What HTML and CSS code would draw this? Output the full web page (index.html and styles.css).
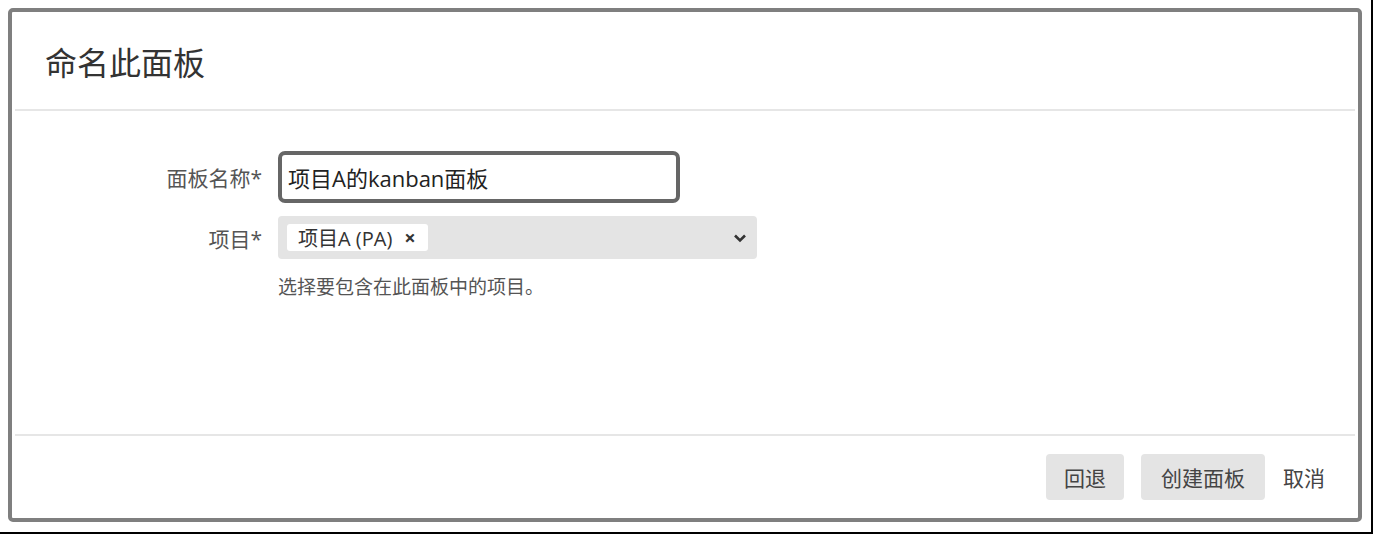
FILE: index.html
```html
<!DOCTYPE html>
<html lang="zh-CN">
<head>
<meta charset="UTF-8" />
<meta name="viewport" content="width=device-width, initial-scale=1" />
<title>命名此面板</title>
<link rel="stylesheet" href="styles.css">
</head>
<body>

<div class="page">
  <div class="dialog">
    <div class="dialog-header">
      <h2>命名此面板</h2>
    </div>

    <div class="dialog-body">
      <div class="form">
        <label class="form-label" for="board-name">面板名称*</label>
        <div class="text-input">
          <input id="board-name" type="text" value="项目A的kanban面板" />
        </div>

        <label class="form-label">项目*</label>
        <div class="multi-select">
          <span class="tag">项目A (PA) <span class="tag-remove">×</span></span>
          <svg class="chevron" width="14" height="10" viewBox="0 0 14 10">
            <path d="M2 2.5 L7 7.5 L12 2.5" fill="none" stroke="#333" stroke-width="2.6" />
          </svg>
        </div>

        <span></span>
        <div class="help">选择要包含在此面板中的项目。</div>
      </div>
    </div>

    <div class="dialog-footer">
      <button class="btn">回退</button>
      <button class="btn btn-primary">创建面板</button>
      <button class="btn btn-link">取消</button>
    </div>
  </div>
</div>

</body>
</html>
```

FILE: styles.css
```css
body {
  margin: 0;
  background: #fff;
  font-family: 'Open Sans', 'Noto Sans CJK SC', sans-serif;
  color: #333;
}
.page {
  width: 1373px;
  height: 534px;
  box-sizing: border-box;
  padding: 8px 9px 10px 8px;
  border-right: 2px solid #000;
  border-bottom: 2px solid #000;
}
.dialog {
  height: 100%;
  box-sizing: border-box;
  border: 4px solid #7f7f7f;
  border-radius: 5px;
  background: #fff;
  display: flex;
  flex-direction: column;
}
.dialog-header {
  height: 97px;
  margin: 0 3px;
  border-bottom: 2px solid #e6e6e6;
  display: flex;
  align-items: center;
  padding-left: 30px;
}
.dialog-header h2 {
  margin: 0;
  font-size: 32px;
  font-weight: 400;
  color: #333;
}

.dialog-body {
  flex: 1;
}
.form {
  display: grid;
  grid-template-columns: 250px auto;
  column-gap: 16px;
  row-gap: 13px;
  padding-top: 40px;
  align-items: center;
}
.form-label {
  text-align: right;
  font-size: 21px;
  color: #555;
}
.text-input {
  width: 402px;
  height: 52px;
  box-sizing: border-box;
  border: 4px solid #666;
  border-radius: 7px;
  padding: 0 6px;
  display: flex;
  align-items: center;
}
.text-input input {
  width: 100%;
  border: none;
  padding: 0;
  font-family: inherit;
  font-size: 22px;
  color: #222;
  outline: none;
}
.multi-select {
  width: 479px;
  height: 43px;
  box-sizing: border-box;
  background: #e4e4e4;
  border-radius: 4px;
  display: flex;
  align-items: center;
  justify-content: space-between;
  padding: 0 10px 0 9px;
}
.tag {
  background: #fff;
  border-radius: 3px;
  height: 27px;
  display: flex;
  align-items: center;
  padding: 0 12px 0 11px;
  font-size: 20px;
  color: #333;
}
.tag-remove {
  font-weight: 700;
  margin-left: 12px;
  font-size: 20px;
}
.help {
  font-size: 19px;
  color: #555;
}

.dialog-footer {
  height: 82px;
  margin: 0 3px;
  border-top: 2px solid #e6e6e6;
  display: flex;
  align-items: center;
  justify-content: flex-end;
  padding-right: 12px;
}
.btn {
  height: 46px;
  padding: 0 18px;
  border: none;
  border-radius: 4px;
  background: #e4e4e4;
  font-family: inherit;
  font-size: 21px;
  color: #444;
}
.btn-primary {
  margin-left: 17px;
  padding: 0 20px;
}
.btn-link {
  background: none;
}
```
